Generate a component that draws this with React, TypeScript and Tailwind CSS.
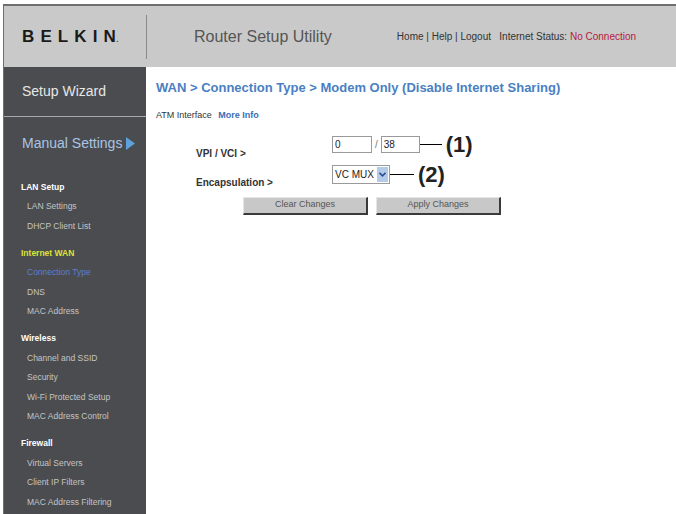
import React from 'react';

const navSections = [
  { title: 'LAN Setup', items: ['LAN Settings', 'DHCP Client List'] },
  { title: 'Internet WAN', items: ['Connection Type', 'DNS', 'MAC Address'], active: true },
  { title: 'Wireless', items: ['Channel and SSID', 'Security', 'Wi-Fi Protected Setup', 'MAC Address Control'] },
  { title: 'Firewall', items: ['Virtual Servers', 'Client IP Filters', 'MAC Address Filtering'] },
];

function Callout({ label, line }: { label: string; line: string }) {
  return (
    <div className="flex items-center">
      <div className={`h-px bg-black ${line}`} />
      <span className="ml-[4px] font-['Liberation_Sans_Narrow','Liberation_Sans',sans-serif] text-[22px] font-bold leading-none text-[#222]">
        {label}
      </span>
    </div>
  );
}

export default function App() {
  return (
    <div className="w-[676px] h-[514px] overflow-hidden bg-white pl-[3px] pt-[4px] font-['Liberation_Sans',Arial,sans-serif]">
      <div className="flex h-full flex-col border-t-2 border-l border-[#6f6f6f]">
        {/* header */}
        <div className="flex h-[61px] shrink-0 items-center bg-[#c9c9c9]">
          <div className="flex w-[142px] items-baseline pl-[18px] text-[#1a1a1a]">
            <span className="text-[17px] font-bold tracking-[0.36em]">BELKI</span>
            <span className="text-[17px] font-bold">N</span>
            <span className="text-[10px] text-[#333]">.</span>
          </div>
          <div className="h-[44px] w-px bg-[#8a8a8a]" />
          <div className="ml-[47px] text-[16px] text-[#555]">Router Setup Utility</div>
          <div className="ml-[65px] text-[10px] text-[#333]">
            Home | Help | Logout &nbsp; Internet Status: <span className="text-[#b5193d]">No Connection</span>
          </div>
        </div>

        <div className="flex flex-1">
          {/* sidebar */}
          <div className="w-[142px] shrink-0 bg-[#4b4c4f]">
            <div className="flex h-[49px] items-center pl-[18px] text-[14px] text-[#e6e6e6]">Setup Wizard</div>
            <div className="h-px bg-[#a9a9a9]" />
            <div className="flex h-[52px] items-center pl-[18px] text-[14px] text-[#a9c4e4]">
              Manual Settings
              <svg className="ml-[4px]" width="9" height="13" viewBox="0 0 9 13">
                <path d="M0 0 L9 6.5 L0 13 Z" fill="#5da0dc" />
              </svg>
            </div>
            <div className="mt-[8px] flex flex-col">
              {navSections.map((s) => (
                <div key={s.title} className="mb-[7px]">
                  <div
                    className={`flex h-[20px] items-center pl-[17px] text-[8.5px] font-bold ${
                      s.active ? 'text-[#dbe33a]' : 'text-white'
                    }`}
                  >
                    {s.title}
                  </div>
                  {s.items.map((it) => (
                    <div
                      key={it}
                      className={`flex h-[19.5px] items-center pl-[23px] text-[8.5px] ${
                        it === 'Connection Type' ? 'text-[#5b7fd0]' : 'text-[#c4c4c4]'
                      }`}
                    >
                      {it}
                    </div>
                  ))}
                </div>
              ))}
            </div>
          </div>

          {/* main */}
          <div className="flex-1 pl-[10px]">
            <h1 className="mt-[13px] text-[13px] font-bold leading-[16px] text-[#4a7fc2]">
              WAN &gt; Connection Type &gt; Modem Only (Disable Internet Sharing)
            </h1>
            <div className="mt-[13px] text-[9px] text-[#333]">
              ATM Interface <span className="ml-[4px] font-bold text-[#3b6cb4]">More Info</span>
            </div>

            <div className="mt-[11px] flex h-[22px] items-center">
              <div className="-mb-[3px] w-[176px] self-end pl-[40px] text-[10px] font-bold leading-none text-[#333]">VPI / VCI &gt;</div>
              <div className="flex h-[17px] w-[40px] items-center border border-[#9a9a9a] pl-[2px] text-[10px] text-[#222]">0</div>
              <span className="mx-[3px] text-[10px] text-[#777]">/</span>
              <div className="flex h-[17px] w-[39px] items-center border border-[#9a9a9a] pl-[2px] text-[10px] text-[#222]">38</div>
              <Callout label="(1)" line="w-[22px]" />
            </div>

            <div className="mt-[8px] flex h-[22px] items-center">
              <div className="-mb-[2px] w-[176px] self-end pl-[40px] text-[10px] font-bold leading-none text-[#333]">Encapsulation &gt;</div>
              <div className="flex h-[19px] w-[58px] items-center border border-[#9a9a9a] pl-[2px]">
                <span className="flex-1 whitespace-nowrap text-[10px] text-[#222]">VC MUX</span>
                <span className="mr-px flex h-[15px] w-[11px] shrink-0 items-center justify-center bg-[#b3cbe8]">
                  <svg width="7" height="5" viewBox="0 0 7 5">
                    <path d="M0.5 0.8 L3.5 3.8 L6.5 0.8" fill="none" stroke="#2c4f91" strokeWidth="1.6" />
                  </svg>
                </span>
              </div>
              <Callout label="(2)" line="w-[24px]" />
            </div>

            <div className="mt-[11px] flex gap-[8px] pl-[87px]">
              {['Clear Changes', 'Apply Changes'].map((b) => (
                <div
                  key={b}
                  className="flex h-[18px] w-[125px] items-center justify-center border border-t-[#e6e6e6] border-l-[#e6e6e6] border-r-2 border-b-2 border-r-[#3a3a3a] border-b-[#3a3a3a] bg-[#c8c8c8] text-[9px] text-[#555]"
                >
                  {b}
                </div>
              ))}
            </div>
          </div>
        </div>
      </div>
    </div>
  );
}
